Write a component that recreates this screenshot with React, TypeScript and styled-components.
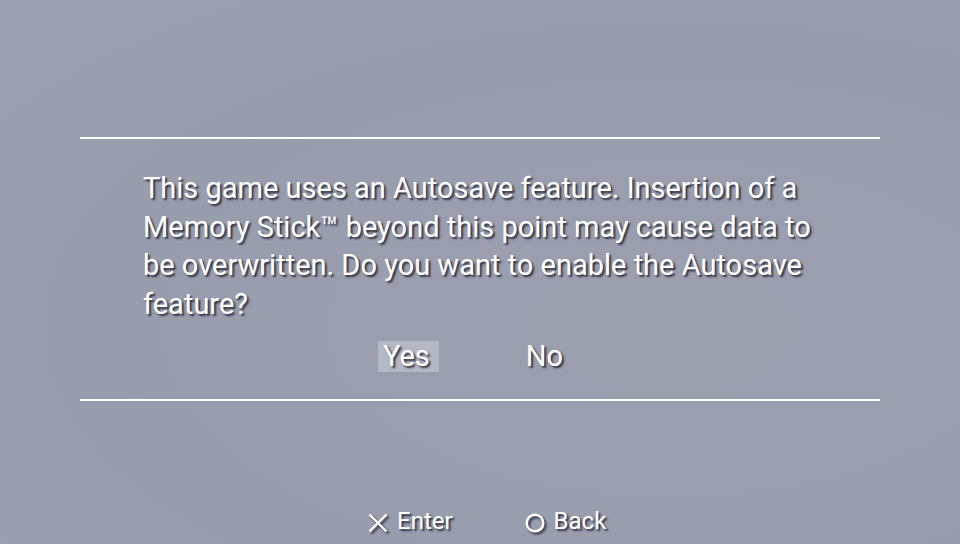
import React from "react";
import styled, { createGlobalStyle } from "styled-components";

const Global = createGlobalStyle`
  html, body {
    margin: 0;
    padding: 0;
    background: #9a9fb0;
  }
`;

const Screen = styled.div`
  width: 960px;
  height: 544px;
  overflow: hidden;
  background: radial-gradient(ellipse at 70% 60%, #9b9fae 0%, #989dae 60%, #9a9eb0 100%);
  display: flex;
  flex-direction: column;
  font-family: Roboto, "Liberation Sans", sans-serif;
  color: #ffffff;
  text-shadow: 2px 2px 2px rgba(35, 38, 50, 0.9);
`;

const Dialog = styled.div`
  margin: 137px 80px 0;
  height: 264px;
  border-top: 2px solid #ffffff;
  border-bottom: 2px solid #ffffff;
  box-sizing: border-box;
  display: flex;
  flex-direction: column;
`;

const Message = styled.p`
  margin: 30px 0 0 63px;
  font-size: 29px;
  line-height: 38.5px;
`;

const Choices = styled.div`
  display: flex;
  gap: 87px;
  margin-top: 18px;
  padding-left: 298px;
`;

const Choice = styled.span<{ $active?: boolean }>`
  font-size: 29px;
  line-height: 31px;
  padding: ${(p) => (p.$active ? "0 9px 0 5px" : "0")};
  background: ${(p) => (p.$active ? "#b5b8c4" : "transparent")};
`;

const Footer = styled.div`
  margin-top: 105px;
  padding-left: 368px;
  display: flex;
  gap: 72px;
  font-size: 24px;
  line-height: 30px;
`;

const Hint = styled.div`
  display: flex;
  align-items: center;
  gap: 9px;
`;

const Glyph = styled.svg`
  width: 20px;
  height: 20px;
  margin-top: 4px;
  filter: drop-shadow(2px 2px 1px rgba(35, 38, 50, 0.9));
`;

const CrossIcon = () => (
  <Glyph viewBox="0 0 20 20">
    <path d="M1.5 1.5 L18.5 18.5 M18.5 1.5 L1.5 18.5" stroke="#fff" strokeWidth="2.3" fill="none" />
  </Glyph>
);

const CircleIcon = () => (
  <Glyph viewBox="0 0 20 20">
    <circle cx="10" cy="10" r="8.3" stroke="#fff" strokeWidth="2.4" fill="none" />
  </Glyph>
);

export default function App() {
  return (
    <>
      <Global />
      <Screen>
        <Dialog>
          <Message>
            This game uses an Autosave feature. Insertion of a
            <br />
            Memory Stick™ beyond this point may cause data to
            <br />
            be overwritten. Do you want to enable the Autosave
            <br />
            feature?
          </Message>
          <Choices>
            <Choice $active>Yes</Choice>
            <Choice>No</Choice>
          </Choices>
        </Dialog>
        <Footer>
          <Hint>
            <CrossIcon />
            Enter
          </Hint>
          <Hint>
            <CircleIcon />
            Back
          </Hint>
        </Footer>
      </Screen>
    </>
  );
}
